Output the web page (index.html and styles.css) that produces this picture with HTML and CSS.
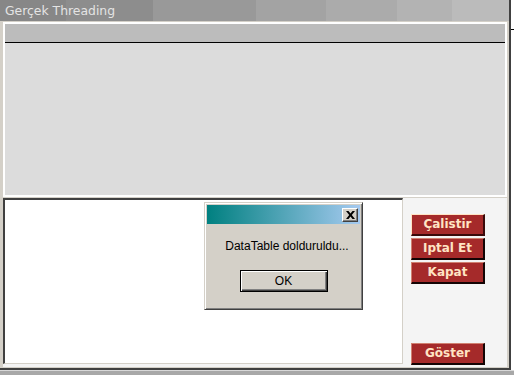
FILE: index.html
```html
<!DOCTYPE html>
<html lang="tr">
<head>
    <meta charset="UTF-8">
    <meta name="viewport" content="width=device-width, initial-scale=1.0">
    <title>Gerçek Threading</title>
    <link rel="stylesheet" href="styles.css">
</head>
<body>
    <div id="screen">
        <div id="top-row">
            <!-- ana pencere -->
            <div id="window">
                <div id="titlebar">Gerçek Threading</div>
                <div id="client">
                    <div id="grid">
                        <div id="grid-header"></div>
                        <div id="grid-body"></div>
                    </div>
                    <div id="bottom">
                        <div id="output"></div>
                        <div id="side">
                            <div class="btn focused">Çalistir</div>
                            <div class="btn">Iptal Et</div>
                            <div class="btn">Kapat</div>
                            <div class="btn last">Göster</div>
                        </div>
                    </div>
                </div>
            </div>
            <div id="behind">
                <div class="tick"></div>
            </div>
        </div>
        <div id="taskbar"></div>
    </div>

    <!-- mesaj kutusu -->
    <div id="msgbox">
        <div class="msg-title">
            <div class="msg-close">
                <svg width="9" height="8" viewBox="0 0 9 8">
                    <path d="M0 0h2.5l2 2.5 2-2.5H9L5.8 4 9 8H6.5l-2-2.5-2 2.5H0l3.2-4z" fill="#000"/>
                </svg>
            </div>
        </div>
        <div class="msg-text">DataTable dolduruldu...</div>
        <div class="msg-ok">OK</div>
    </div>
</body>
</html>
```

FILE: styles.css
```css
/* genel */
body {
    margin: 0;
    padding: 0;
    background-color: #fff;
    font-family: "DejaVu Sans", sans-serif;
    width: 514px;
    height: 375px;
    overflow: hidden;
}
#screen {
    display: flex;
    flex-direction: column;
    height: 375px;
}
#top-row {
    display: flex;
    height: 370px;
}
/* pencere */
#window {
    width: 509px;
    background-color: #d4d0c8;
    border-right: 2px solid #404040;
    border-bottom: 2px solid #404040;
    display: flex;
    flex-direction: column;
}
#titlebar {
    height: 21px;
    line-height: 21px;
    padding-left: 5px;
    font-size: 12.4px;
    color: #e4e4e4;
    background: linear-gradient(to right,
        #878787 0, #878787 66px,
        #8d8d8d 66px, #8d8d8d 153px,
        #999 153px, #999 256px,
        #a3a3a3 256px, #a3a3a3 326px,
        #ababab 326px, #ababab 397px,
        #b3b3b3 397px, #b3b3b3 452px,
        #bbb 452px);
}
#client {
    flex: 1;
    display: flex;
    flex-direction: column;
    padding: 1px 2px 1px 3px;
}
/* tablo */
#grid {
    border: 2px solid #fff;
    display: flex;
    flex-direction: column;
}
#grid-header {
    height: 18px;
    background-color: #bcbcbc;
    border-bottom: 1px solid #000;
}
#grid-body {
    height: 152px;
    background-color: #dcdcdc;
}
/* alt bölüm */
#bottom {
    flex: 1;
    margin-top: 1px;
    display: flex;
    background-color: #f4f4f4;
}
#output {
    width: 397px;
    margin-bottom: 3px;
    background-color: #fff;
    border-top: 2px solid #404040;
    border-left: 2px solid #404040;
    border-right: 1px solid #d4d0c8;
    border-bottom: 1px solid #d4d0c8;
}
#side {
    flex: 1;
    display: flex;
    flex-direction: column;
    padding: 16px 0 2px 8px;
}
.btn {
    width: 71px;
    height: 19px;
    margin-bottom: 2px;
    background-color: #a52a2a;
    color: #ffe4c4;
    font-size: 12px;
    font-weight: bold;
    line-height: 19px;
    text-align: center;
    border-style: solid;
    border-width: 1px 2px 2px 1px;
    border-color: #d08070 #140404 #140404 #d08070;
}
.btn.focused {
    border-color: #ffe4c4 #3a0a0a #3a0a0a #ffe4c4;
}
.btn.last {
    margin-top: auto;
    margin-bottom: 0;
}
/* arka plan */
#behind {
    flex: 1;
    background-color: #fff;
    position: relative;
}
.tick {
    position: absolute;
    left: 0;
    top: 29px;
    width: 3px;
    height: 1px;
    background-color: #000;
}
#taskbar {
    flex: 1;
    background-color: #a8a8a8;
    border-top: 1px solid #d8d8d8;
}
/* mesaj kutusu */
#msgbox {
    position: absolute;
    left: 204px;
    top: 202px;
    width: 157px;
    height: 106px;
    background-color: #d4d0c8;
    border: 1px solid;
    border-color: #d4d0c8 #404040 #404040 #d4d0c8;
    box-shadow: inset 1px 1px #fff, inset -1px -1px #808080;
    display: flex;
    flex-direction: column;
    align-items: center;
    font-family: "Liberation Sans", Arial, sans-serif;
    font-size: 12px;
    color: #000;
}
.msg-title {
    align-self: stretch;
    height: 19px;
    margin: 2px 2px 0 2px;
    background: linear-gradient(to right, #008080, #a6caf0);
    display: flex;
    justify-content: flex-end;
    align-items: center;
    padding-right: 2px;
}
.msg-close {
    width: 14px;
    height: 12px;
    background-color: #d4d0c8;
    border: 1px solid;
    border-color: #fff #404040 #404040 #fff;
    box-shadow: inset -1px -1px #808080;
    display: flex;
    align-items: center;
    justify-content: center;
}
.msg-text {
    margin-top: 14px;
    padding-left: 7px;
    line-height: 16px;
}
.msg-ok {
    margin-top: 16px;
    width: 86px;
    height: 20px;
    line-height: 20px;
    text-align: center;
    border: 1px solid #000;
    box-shadow: inset 1px 1px #fff, inset -1px -1px #404040, inset -2px -2px #808080;
}
```
